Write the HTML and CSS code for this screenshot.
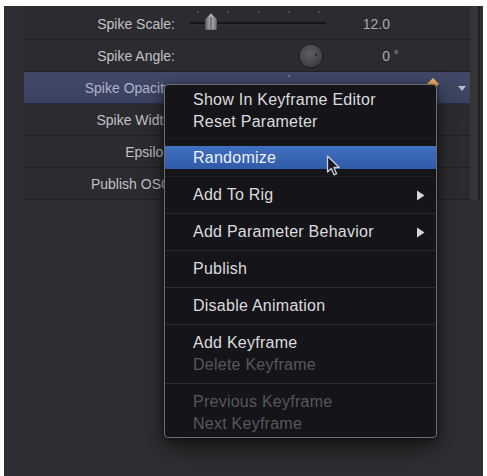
FILE: index.html
```html
<!DOCTYPE html>
<html>
<head>
<meta charset="utf-8">
<link rel="stylesheet" href="styles.css">
</head>
<body>
<div class="screen">
  <div class="inspector">
    <div class="panel">
      <div class="row">
        <div class="label">Spike Scale:</div>
        <div class="control">
          <svg class="slider" width="136" height="32" viewBox="0 0 136 32">
            <circle cx="8" cy="4" r="0.9" fill="#5a595e"/>
            <circle cx="38" cy="4" r="0.9" fill="#5a595e"/>
            <circle cx="69" cy="4" r="0.9" fill="#5a595e"/>
            <circle cx="99" cy="4" r="0.9" fill="#5a595e"/>
            <circle cx="129" cy="4" r="0.9" fill="#5a595e"/>
            <rect x="0" y="14" width="136" height="2.5" rx="1" fill="#151417"/>
            <rect x="0" y="16.5" width="136" height="1" fill="#3a393d"/>
            <defs>
              <linearGradient id="th" x1="0" x2="1" y1="0" y2="0">
                <stop offset="0" stop-color="#5d5c60"/>
                <stop offset="0.5" stop-color="#b5b4b8"/>
                <stop offset="1" stop-color="#6a696d"/>
              </linearGradient>
            </defs>
            <path d="M21 5 L27 11 L27 22 L15 22 L15 11 Z" fill="url(#th)" stroke="#2a292c" stroke-width="0.6"/>
            <rect x="20.5" y="9" width="1" height="12" fill="#3e3d41"/>
          </svg>
        </div>
        <div class="value"><span class="num">12.0</span><span class="unit"></span></div>
      </div>
      <div class="row">
        <div class="label">Spike Angle:</div>
        <div class="control dialcell">
          <svg width="26" height="26" viewBox="0 0 26 26">
            <defs>
              <radialGradient id="dg" cx="0.45" cy="0.4" r="0.6">
                <stop offset="0" stop-color="#606063"/>
                <stop offset="1" stop-color="#3c3b3f"/>
              </radialGradient>
            </defs>
            <circle cx="13" cy="13" r="12" fill="url(#dg)" stroke="#1c1b1e" stroke-width="1"/>
            <circle cx="18" cy="12" r="1.3" fill="#2a292c"/>
          </svg>
        </div>
        <div class="value"><span class="num">0</span><span class="unit">°</span></div>
      </div>
      <div class="row active">
        <div class="label">Spike Opacity:</div>
        <div class="control">
          <svg class="slider" width="136" height="32" viewBox="0 0 136 32">
            <circle cx="99" cy="4" r="0.9" fill="#8a90a8"/>
            <rect x="0" y="14" width="136" height="2.5" rx="1" fill="#2a3048"/>
          </svg>
        </div>
        <div class="tools">
          <svg class="kf" width="14" height="14" viewBox="0 0 14 14">
            <defs>
              <linearGradient id="kg" x1="0" x2="0" y1="0" y2="1">
                <stop offset="0" stop-color="#f3c27a"/>
                <stop offset="1" stop-color="#d8782c"/>
              </linearGradient>
            </defs>
            <path d="M7 1 L13 7 L7 13 L1 7 Z" fill="url(#kg)"/>
          </svg>
          <svg class="drop" width="10" height="8" viewBox="0 0 10 8">
            <path d="M1 2 L9 2 L5 7 Z" fill="#b9bdd0"/>
          </svg>
        </div>
      </div>
      <div class="row">
        <div class="label">Spike Width:</div>
      </div>
      <div class="row">
        <div class="label">Epsilon:</div>
      </div>
      <div class="row">
        <div class="label">Publish OSC:</div>
      </div>
    </div>
    <div class="scroll"></div>
    <div class="scroll-line"></div>
  </div>

  <div class="menu">
    <div class="group first">
      <div class="item">Show In Keyframe Editor</div>
      <div class="item">Reset Parameter</div>
    </div>
    <div class="sep faint"></div>
    <div class="group">
      <div class="item selected">Randomize</div>
    </div>
    <div class="sep faint"></div>
    <div class="group">
      <div class="item sub">Add To Rig
        <svg class="arrow" width="9" height="11" viewBox="0 0 9 11"><path d="M1 0.5 L8.5 5.5 L1 10.5 Z" fill="#d6d6d8"/></svg>
      </div>
    </div>
    <div class="sep"></div>
    <div class="group">
      <div class="item sub">Add Parameter Behavior
        <svg class="arrow" width="9" height="11" viewBox="0 0 9 11"><path d="M1 0.5 L8.5 5.5 L1 10.5 Z" fill="#d6d6d8"/></svg>
      </div>
    </div>
    <div class="sep"></div>
    <div class="group">
      <div class="item">Publish</div>
    </div>
    <div class="sep"></div>
    <div class="group">
      <div class="item">Disable Animation</div>
    </div>
    <div class="sep"></div>
    <div class="group">
      <div class="item">Add Keyframe</div>
      <div class="item disabled">Delete Keyframe</div>
    </div>
    <div class="sep"></div>
    <div class="group last">
      <div class="item disabled">Previous Keyframe</div>
      <div class="item disabled">Next Keyframe</div>
    </div>
  </div>

  <svg class="cursor" width="16" height="22" viewBox="0 0 16 22">
    <path d="M1.5 1 L1.5 17 L5.3 13.4 L8 19.8 L10.6 18.7 L8 12.5 L13.2 12.5 Z" fill="#1a1a1e" stroke="#c9ccd8" stroke-width="1.3" stroke-linejoin="round"/>
  </svg>
</div>
</body>
</html>
```

FILE: styles.css
```css
html, body {
  margin: 0;
  padding: 0;
  background: #ffffff;
}

.screen {
  position: relative;
  margin: 6px 4px 0 4px;
  height: 470px;
  background: #2f2e32;
  font-family: "Liberation Sans", Arial, sans-serif;
  overflow: hidden;
}

.inspector {
  display: flex;
  align-items: stretch;
}

.panel {
  margin-left: 20px;
  width: 446px;
  padding-top: 2px;
  background: #2c2b2f;
}

.row {
  box-sizing: border-box;
  height: 32px;
  display: flex;
  align-items: center;
  border-bottom: 1px solid #212024;
  color: #c2c2c6;
  font-size: 14px;
}

.row.active {
  background: linear-gradient(#424967, #3b4261);
  color: #adb3cb;
  border-bottom-color: #2a2f44;
}

.label {
  width: 151px;
  flex: none;
  text-align: right;
}

.control {
  margin-left: 15px;
  width: 136px;
  height: 32px;
  flex: none;
  display: flex;
  align-items: center;
}

.dialcell {
  justify-content: flex-end;
  padding-right: 2px;
  box-sizing: border-box;
}

.slider {
  display: block;
}

.value {
  width: 64px;
  flex: none;
  display: flex;
  justify-content: flex-end;
  color: #a9a9ad;
  position: relative;
}

.num {
  text-align: right;
}

.unit {
  position: absolute;
  left: 68px;
  top: 0;
  font-size: 11px;
}

.tools {
  margin-left: auto;
  display: flex;
  align-items: center;
  padding-right: 3px;
}

.kf {
  display: block;
  margin-right: 17px;
  margin-top: -8px;
}

.drop {
  display: block;
}

.scroll {
  width: 8px;
  background: #353438;
}

.scroll-line {
  width: 2px;
  background: #1f1e21;
}

.menu {
  position: absolute;
  left: 160px;
  top: 78px;
  width: 273px;
  box-sizing: border-box;
  background: #151418;
  border: 1px solid #6d6c72;
  border-radius: 4px;
  box-shadow: 0 10px 24px rgba(0, 0, 0, 0.55), 0 2px 6px rgba(0, 0, 0, 0.4);
  font-size: 16px;
  letter-spacing: 0.25px;
  color: #dcdcde;
}

.group {
  padding: 7px 0;
}

.group.first {
  padding: 4px 0 5px 0;
}

.group.last {
  padding-bottom: 2px;
}

.item {
  height: 22px;
  line-height: 22px;
  padding-left: 28px;
  padding-right: 10px;
  display: flex;
  align-items: center;
  justify-content: space-between;
  white-space: nowrap;
}

.item.selected {
  background: linear-gradient(#4170c0, #2f5aa8);
  color: #eef1fa;
  height: 23px;
}

.item.disabled {
  color: #58575c;
}

.arrow {
  display: block;
  margin-right: 1px;
}

.sep {
  height: 1px;
  background: #2b2a2f;
}

.sep.faint {
  background: #1d1c20;
}

.cursor {
  position: absolute;
  left: 322px;
  top: 149px;
}
```
